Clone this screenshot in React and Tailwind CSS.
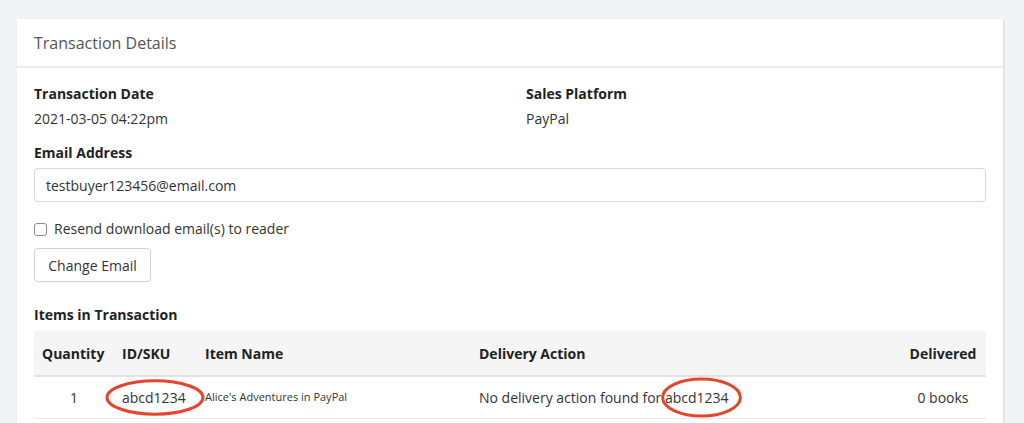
import React from "react";

const Ellipse = ({ className }) => (
  <svg
    className={`pointer-events-none absolute ${className}`}
    viewBox="0 0 100 40"
    preserveAspectRatio="none"
  >
    <ellipse
      cx="50"
      cy="20"
      rx="48"
      ry="18"
      fill="none"
      stroke="#e5452c"
      strokeWidth="3"
      vectorEffect="non-scaling-stroke"
    />
  </svg>
);

const App = () => {
  return (
    <div
      className="min-h-screen bg-[#f2f3f5] px-[17px] pt-[19px] text-[14px] text-[#333]"
      style={{ fontFamily: "'Open Sans', 'Liberation Sans', sans-serif" }}
    >
      <div className="w-[986px] bg-white shadow-[1px_1px_2px_rgba(0,0,0,0.12)]">
        {/* header */}
        <div className="flex h-[49px] items-center border-b-2 border-[#ebebeb] px-[17px] text-[16px] text-[#555]">
          Transaction Details
        </div>

        <div className="px-[17px] pt-[16px] pb-6">
          <div className="grid grid-cols-[492px_1fr]">
            <div>
              <div className="font-bold leading-5 text-[#222]">Transaction Date</div>
              <div className="mt-[5px] leading-5">2021-03-05 04:22pm</div>
            </div>
            <div>
              <div className="font-bold leading-5 text-[#222]">Sales Platform</div>
              <div className="mt-[5px] leading-5">PayPal</div>
            </div>
          </div>

          <div className="mt-[14px] font-bold leading-5 text-[#222]">Email Address</div>
          <div className="mt-[5px] flex h-[34px] items-center rounded-[4px] border border-[#d6d6d6] px-[11px]">
            testbuyer123456@email.com
          </div>

          <label className="mt-[17px] flex items-center gap-[7px] leading-5">
            <span className="h-[13px] w-[13px] rounded-[3px] border border-[#8a8a8a] bg-white" />
            Resend download email(s) to reader
          </label>

          <button className="mt-[9px] h-[34px] w-[117px] rounded-[4px] border border-[#d0d0d0] bg-white text-[14px] text-[#333]">
            Change Email
          </button>

          <div className="mt-[23px] font-bold leading-5 text-[#222]">Items in Transaction</div>

          <table className="mt-[6px] w-full table-fixed border-collapse">
            <colgroup>
              <col className="w-[80px]" />
              <col className="w-[83px]" />
              <col className="w-[274px]" />
              <col />
              <col className="w-[86px]" />
            </colgroup>
            <thead>
              <tr className="h-[45px] border-b-2 border-[#e3e3e3] bg-[#f5f5f5] font-bold text-[#222]">
                <th className="px-2 text-left">Quantity</th>
                <th className="px-2 text-left">ID/SKU</th>
                <th className="px-2 text-left">Item Name</th>
                <th className="px-2 text-left">Delivery Action</th>
                <th className="px-2 text-center">Delivered</th>
              </tr>
            </thead>
            <tbody>
              <tr className="h-[42px] border-b border-[#e6e6e6]">
                <td className="px-2 text-center">1</td>
                <td className="px-2">
                  <span className="relative inline-block leading-5">
                    abcd1234
                    <Ellipse className="left-[-17px] top-[-9px] h-[37px] w-[100px]" />
                  </span>
                </td>
                <td className="px-2 text-[11px]">Alice's Adventures in PayPal</td>
                <td className="px-2">
                  No delivery action found for{" "}
                  <span className="relative inline-block leading-5">
                    abcd1234
                    <Ellipse className="left-[-4px] top-[-11px] h-[41px] w-[81px]" />
                  </span>
                </td>
                <td className="px-2 text-center">0 books</td>
              </tr>
            </tbody>
          </table>

          <div className="mt-[6px] font-bold leading-5 text-[#222]">Wishlist Transaction Log</div>
        </div>
      </div>
    </div>
  );
};

export default App;
